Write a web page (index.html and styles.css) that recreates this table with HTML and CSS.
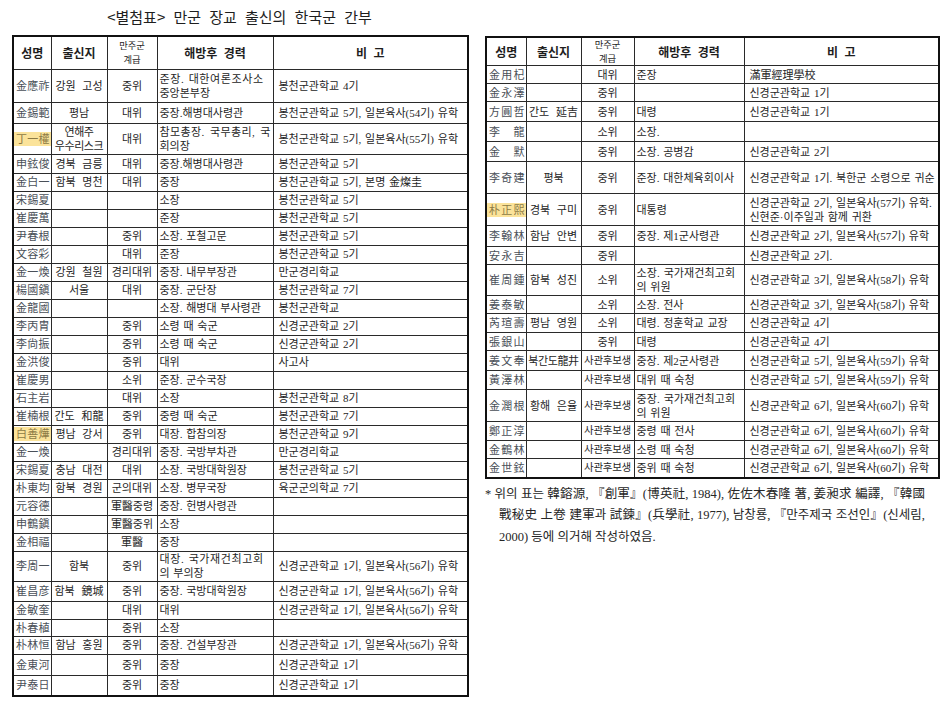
FILE: index.html
```html
<!DOCTYPE html>
<html lang="ko">
<head>
<meta charset="utf-8">
<title>별첨표</title>
<link rel="stylesheet" href="styles.css">
</head>
<body>
<div class="page">
  <div class="col-left">
    <div class="title">&lt;별첨표&gt; 만군 장교 출신의 한국군 간부</div>
    <table class="tbl tbl-left">
      <colgroup><col class="c1"><col class="c2"><col class="c3"><col class="c4"><col class="c5"></colgroup>
      <tr class="head"><th>성명</th><th>출신지</th><th class="two"><span class="hl1">만주군</span><span class="hl2">계급</span></th><th>해방후 경력</th><th>비 고</th></tr>
      <tr class="t33"><td class="nm">金應祚</td><td class="org">강원 고성</td><td class="rk">중위</td><td class="cr"><span class="ln sp">준장. 대한여론조사소</span><span class="ln">중앙본부장</span></td><td class="nt">봉천군관학교 4기</td></tr>
      <tr class="t21"><td class="nm">金錫範</td><td class="org">평남</td><td class="rk">대위</td><td class="cr">중장.해병대사령관</td><td class="nt">봉천군관학교 5기, 일본육사(54기) 유학</td></tr>
      <tr class="t31"><td class="nm"><span class="hl">丁一權</span></td><td class="org tight">연해주<br>우수리스크</td><td class="rk">대위</td><td class="cr"><span class="ln sp2">참모총장. 국무총리, 국</span><span class="ln">회의장</span></td><td class="nt">봉천군관학교 5기, 일본육사(55기) 유학</td></tr>
      <tr class="t19"><td class="nm">申鉉俊</td><td class="org">경북 금릉</td><td class="rk">대위</td><td class="cr">중장.해병대사령관</td><td class="nt">봉천군관학교 5기</td></tr>
      <tr class="t18"><td class="nm">金白一</td><td class="org">함북 명천</td><td class="rk">대위</td><td class="cr">중장</td><td class="nt">봉천군관학교 5기, 본명 金燦圭</td></tr>
      <tr class="t18"><td class="nm">宋錫夏</td><td class="org"></td><td class="rk"></td><td class="cr">소장</td><td class="nt">봉천군관학교 5기</td></tr>
      <tr class="t18"><td class="nm">崔慶萬</td><td class="org"></td><td class="rk"></td><td class="cr">준장</td><td class="nt">봉천군관학교 5기</td></tr>
      <tr class="t18"><td class="nm">尹春根</td><td class="org"></td><td class="rk">중위</td><td class="cr">소장. 포철고문</td><td class="nt">봉천군관학교 5기</td></tr>
      <tr class="t18"><td class="nm">文容彩</td><td class="org"></td><td class="rk">대위</td><td class="cr">준장</td><td class="nt">봉천군관학교 5기</td></tr>
      <tr class="t18"><td class="nm">金一煥</td><td class="org">강원 철원</td><td class="rk">경리대위</td><td class="cr">중장. 내무부장관</td><td class="nt">만군경리학교</td></tr>
      <tr class="t18"><td class="nm">楊國鎭</td><td class="org">서울</td><td class="rk">대위</td><td class="cr">중장. 군단장</td><td class="nt">봉천군관학교 7기</td></tr>
      <tr class="t18"><td class="nm">金龍國</td><td class="org"></td><td class="rk"></td><td class="cr">소장. 해병대 부사령관</td><td class="nt">봉천군관학교</td></tr>
      <tr class="t18"><td class="nm">李丙胄</td><td class="org"></td><td class="rk">중위</td><td class="cr">소령 때 숙군</td><td class="nt">신경군관학교 2기</td></tr>
      <tr class="t18"><td class="nm">李尙振</td><td class="org"></td><td class="rk">중위</td><td class="cr">소령 때 숙군</td><td class="nt">신경군관학교 2기</td></tr>
      <tr class="t18"><td class="nm">金洪俊</td><td class="org"></td><td class="rk">중위</td><td class="cr">대위</td><td class="nt">사고사</td></tr>
      <tr class="t18"><td class="nm">崔慶男</td><td class="org"></td><td class="rk">소위</td><td class="cr">준장. 군수국장</td><td class="nt"></td></tr>
      <tr class="t18"><td class="nm">石主岩</td><td class="org"></td><td class="rk">대위</td><td class="cr">소장</td><td class="nt">봉천군관학교 8기</td></tr>
      <tr class="t18"><td class="nm">崔楠根</td><td class="org">간도 和龍</td><td class="rk">중위</td><td class="cr">중령 때 숙군</td><td class="nt">봉천군관학교 7기</td></tr>
      <tr class="t18"><td class="nm"><span class="hl">白善燁</span></td><td class="org">평남 강서</td><td class="rk">중위</td><td class="cr">대장. 합참의장</td><td class="nt">봉천군관학교 9기</td></tr>
      <tr class="t18"><td class="nm">金一煥</td><td class="org"></td><td class="rk">경리대위</td><td class="cr">중장. 국방부차관</td><td class="nt">만군경리학교</td></tr>
      <tr class="t18"><td class="nm">宋錫夏</td><td class="org">충남 대전</td><td class="rk">대위</td><td class="cr">소장. 국방대학원장</td><td class="nt">봉천군관학교 5기</td></tr>
      <tr class="t18"><td class="nm">朴東均</td><td class="org">함북 경원</td><td class="rk">군의대위</td><td class="cr">소장. 병무국장</td><td class="nt">육군군의학교 7기</td></tr>
      <tr class="t18"><td class="nm">元容德</td><td class="org"></td><td class="rk">軍醫중령</td><td class="cr">중장. 헌병사령관</td><td class="nt"></td></tr>
      <tr class="t18"><td class="nm">申鶴鎭</td><td class="org"></td><td class="rk">軍醫중위</td><td class="cr">소장</td><td class="nt"></td></tr>
      <tr class="t18"><td class="nm">金相福</td><td class="org"></td><td class="rk">軍醫</td><td class="cr">중장</td><td class="nt"></td></tr>
      <tr class="t30"><td class="nm">李周一</td><td class="org">함북</td><td class="rk">중위</td><td class="cr"><span class="ln sp">대장. 국가재건최고회</span><span class="ln">의 부의장</span></td><td class="nt">신경군관학교 1기, 일본육사(56기) 유학</td></tr>
      <tr class="t20"><td class="nm">崔昌彦</td><td class="org">함북 鏡城</td><td class="rk">중위</td><td class="cr">중장. 국방대학원장</td><td class="nt">신경군관학교 1기, 일본육사(56기) 유학</td></tr>
      <tr class="t18"><td class="nm">金敏奎</td><td class="org"></td><td class="rk">대위</td><td class="cr">대위</td><td class="nt">신경군관학교 1기, 일본육사(56기) 유학</td></tr>
      <tr class="t17"><td class="nm">朴春植</td><td class="org"></td><td class="rk">중위</td><td class="cr">소장</td><td class="nt"></td></tr>
      <tr class="t18"><td class="nm">朴林恒</td><td class="org">함남 홍원</td><td class="rk">중위</td><td class="cr">중장. 건설부장관</td><td class="nt">신경군관학교 1기, 일본육사(56기) 유학</td></tr>
      <tr class="t21"><td class="nm">金東河</td><td class="org"></td><td class="rk">중위</td><td class="cr">중장</td><td class="nt">신경군관학교 1기</td></tr>
      <tr class="t21"><td class="nm">尹泰日</td><td class="org"></td><td class="rk">중위</td><td class="cr">중장</td><td class="nt">신경군관학교 1기</td></tr>
    </table>
  </div>
  <div class="col-right">
    <table class="tbl tbl-right">
      <colgroup><col class="d1"><col class="d2"><col class="d3"><col class="d4"><col class="d5"></colgroup>
      <tr class="head head-r"><th>성명</th><th>출신지</th><th class="two"><span class="hl1">만주군</span><span class="hl2">계급</span></th><th>해방후 경력</th><th>비 고</th></tr>
      <tr class="t18"><td class="nm">金用杞</td><td class="org"></td><td class="rk">대위</td><td class="cr">준장</td><td class="nt">滿軍經理學校</td></tr>
      <tr class="t18"><td class="nm">金永澤</td><td class="org"></td><td class="rk">중위</td><td class="cr"></td><td class="nt">신경군관학교 1기</td></tr>
      <tr class="t20"><td class="nm">方圓哲</td><td class="org">간도 延吉</td><td class="rk">중위</td><td class="cr">대령</td><td class="nt">신경군관학교 1기</td></tr>
      <tr class="t20"><td class="nm">李　龍</td><td class="org"></td><td class="rk">소위</td><td class="cr">소장.</td><td class="nt"></td></tr>
      <tr class="t20"><td class="nm">金　默</td><td class="org"></td><td class="rk">중위</td><td class="cr">소장. 공병감</td><td class="nt">신경군관학교 2기</td></tr>
      <tr class="t32"><td class="nm">李奇建</td><td class="org">평북</td><td class="rk">중위</td><td class="cr">준장. 대한체육회이사</td><td class="nt">신경군관학교 1기. 북한군 소령으로 귀순</td></tr>
      <tr class="t32"><td class="nm"><span class="hl">朴正熙</span></td><td class="org">경북 구미</td><td class="rk">중위</td><td class="cr">대통령</td><td class="nt">신경군관학교 2기, 일본육사(57기) 유학.<br>신현준·이주일과 함께 귀환</td></tr>
      <tr class="t21"><td class="nm">李翰林</td><td class="org">함남 안변</td><td class="rk">중위</td><td class="cr">중장. 제1군사령관</td><td class="nt">신경군관학교 2기, 일본육사(57기) 유학</td></tr>
      <tr class="t18"><td class="nm">安永吉</td><td class="org"></td><td class="rk">중위</td><td class="cr"></td><td class="nt">신경군관학교 2기.</td></tr>
      <tr class="t31"><td class="nm">崔周鍾</td><td class="org">함북 성진</td><td class="rk">소위</td><td class="cr"><span class="ln sp3">소장. 국가재건최고회</span><span class="ln">의 위원</span></td><td class="nt">신경군관학교 3기, 일본육사(58기) 유학</td></tr>
      <tr class="t18"><td class="nm">姜泰敏</td><td class="org"></td><td class="rk">소위</td><td class="cr">소장. 전사</td><td class="nt">신경군관학교 3기, 일본육사(58기) 유학</td></tr>
      <tr class="t19"><td class="nm">芮瑄壽</td><td class="org">평남 영원</td><td class="rk">소위</td><td class="cr">대령. 정훈학교 교장</td><td class="nt">신경군관학교 4기</td></tr>
      <tr class="t18"><td class="nm">張銀山</td><td class="org"></td><td class="rk">중위</td><td class="cr">대령</td><td class="nt">신경군관학교 4기</td></tr>
      <tr class="t20"><td class="nm">姜文奉</td><td class="org tight">북간도龍井</td><td class="rk tight">사관후보생</td><td class="cr">중장. 제2군사령관</td><td class="nt">신경군관학교 5기, 일본육사(59기) 유학</td></tr>
      <tr class="t19"><td class="nm">黃澤林</td><td class="org"></td><td class="rk tight">사관후보생</td><td class="cr">대위 때 숙청</td><td class="nt">신경군관학교 5기, 일본육사(59기) 유학</td></tr>
      <tr class="t32"><td class="nm">金潤根</td><td class="org">황해 은율</td><td class="rk tight">사관후보생</td><td class="cr"><span class="ln sp3">중장. 국가재건최고회</span><span class="ln">의 위원</span></td><td class="nt">신경군관학교 6기, 일본육사(60기) 유학</td></tr>
      <tr class="t19"><td class="nm">鄭正淳</td><td class="org"></td><td class="rk tight">사관후보생</td><td class="cr">중령 때 전사</td><td class="nt">신경군관학교 6기, 일본육사(60기) 유학</td></tr>
      <tr class="t18"><td class="nm">金鶴林</td><td class="org"></td><td class="rk tight">사관후보생</td><td class="cr">소령 때 숙청</td><td class="nt">신경군관학교 6기, 일본육사(60기) 유학</td></tr>
      <tr class="t19"><td class="nm">金世鉉</td><td class="org"></td><td class="rk tight">사관후보생</td><td class="cr">중위 때 숙청</td><td class="nt">신경군관학교 6기, 일본육사(60기) 유학</td></tr>
    </table>
    <div class="note">
      <span class="nl jl">* 위의 표는 韓鎔源, 『創軍』(博英社, 1984), 佐佐木春隆 著, 姜昶求 編譯, 『韓國</span>
      <span class="nl ind jl">戰秘史 上卷 建軍과 試鍊』(兵學社, 1977), 남창룡, 『만주제국 조선인』(신세림,</span>
      <span class="nl ind">2000) 등에 의거해 작성하였음.</span>
    </div>
  </div>
</div>
</body>
</html>
```

FILE: styles.css
```css
html, body {
  margin: 0;
  padding: 0;
  background: #ffffff;
}

body {
  font-family: "Liberation Serif", "Noto Sans CJK KR", serif;
  color: #262626;
}

.page {
  display: flex;
  align-items: flex-start;
  gap: 18px;
  padding-left: 12px;
}

.col-left {
  width: 455px;
}

.col-right {
  width: 453px;
  padding-top: 36px;
}

.title {
  height: 35px;
  line-height: 33px;
  text-align: center;
  font-family: "Noto Sans CJK KR", sans-serif;
  font-size: 15px;
  word-spacing: 4px;
  color: #1e1e1e;
}

.tbl {
  width: 100%;
  border-collapse: collapse;
  table-layout: fixed;
  border: 2px solid #111111;
  font-size: 11px;
  word-spacing: 1px;
}

.tbl th,
.tbl td {
  border: 1px solid #2a2a2a;
  padding: 0 2px;
  line-height: 14px;
  white-space: nowrap;
  overflow: hidden;
  vertical-align: middle;
}

.c1 { width: 38px; }
.c2 { width: 56px; }
.c3 { width: 50px; }
.c4 { width: 116px; }
.c5 { width: 195px; }

.d1 { width: 40px; }
.d2 { width: 55px; }
.d3 { width: 53px; }
.d4 { width: 110px; }
.d5 { width: 195px; }

.head { height: 33px; }
.head-r { height: 27px; }

.tbl th {
  font-family: "Noto Sans CJK KR", sans-serif;
  font-size: 12px;
  font-weight: 700;
  color: #1e1e1e;
  text-align: center;
  word-spacing: 3px;
}

.tbl th.two {
  font-size: 9.3px;
  line-height: 13.5px;
  font-weight: 400;
}

.hl1,
.hl2 {
  display: block;
  height: 13.5px;
  line-height: 13.5px;
}

.t17 { height: 17px; }
.t18 { height: 18px; }
.t19 { height: 19px; }
.t20 { height: 20px; }
.t21 { height: 21px; }
.t30 { height: 30px; }
.t31 { height: 31px; }
.t32 { height: 32px; }
.t33 { height: 33px; }

.tbl td.nm {
  padding: 0 1px 0 2px;
  text-align: justify;
  text-align-last: justify;
  color: #4a5058;
}

.hl {
  display: block;
  background: #fbe39a;
  color: #8c7a45;
  text-align: justify;
  text-align-last: justify;
  margin: 0 -1px 0 -2px;
  padding: 0 1px 0 2px;
}

.org {
  text-align: center;
  word-spacing: 4px;
}

.rk {
  text-align: center;
}

.tbl td.tight {
  padding: 0;
  word-spacing: 0;
  letter-spacing: -0.4px;
}

.tbl td.rk.tight {
  font-size: 10.5px;
  letter-spacing: -0.3px;
}

.cr {
  text-align: left;
}

.tbl td.nt {
  text-align: left;
  padding-left: 5px;
}

.ln {
  display: block;
}

.sp {
  letter-spacing: 0.6px;
}

.sp2 {
  letter-spacing: 0.4px;
  word-spacing: 2px;
}

.sp3 {
  letter-spacing: 0.1px;
}

.note {
  margin-top: 5px;
  width: 440px;
  font-size: 12.5px;
  line-height: 21.5px;
  color: #262626;
}

.nl {
  display: block;
  white-space: nowrap;
}

.note .jl {
  white-space: normal;
  text-align: justify;
  text-align-last: justify;
}

.ind {
  padding-left: 14px;
}
```
